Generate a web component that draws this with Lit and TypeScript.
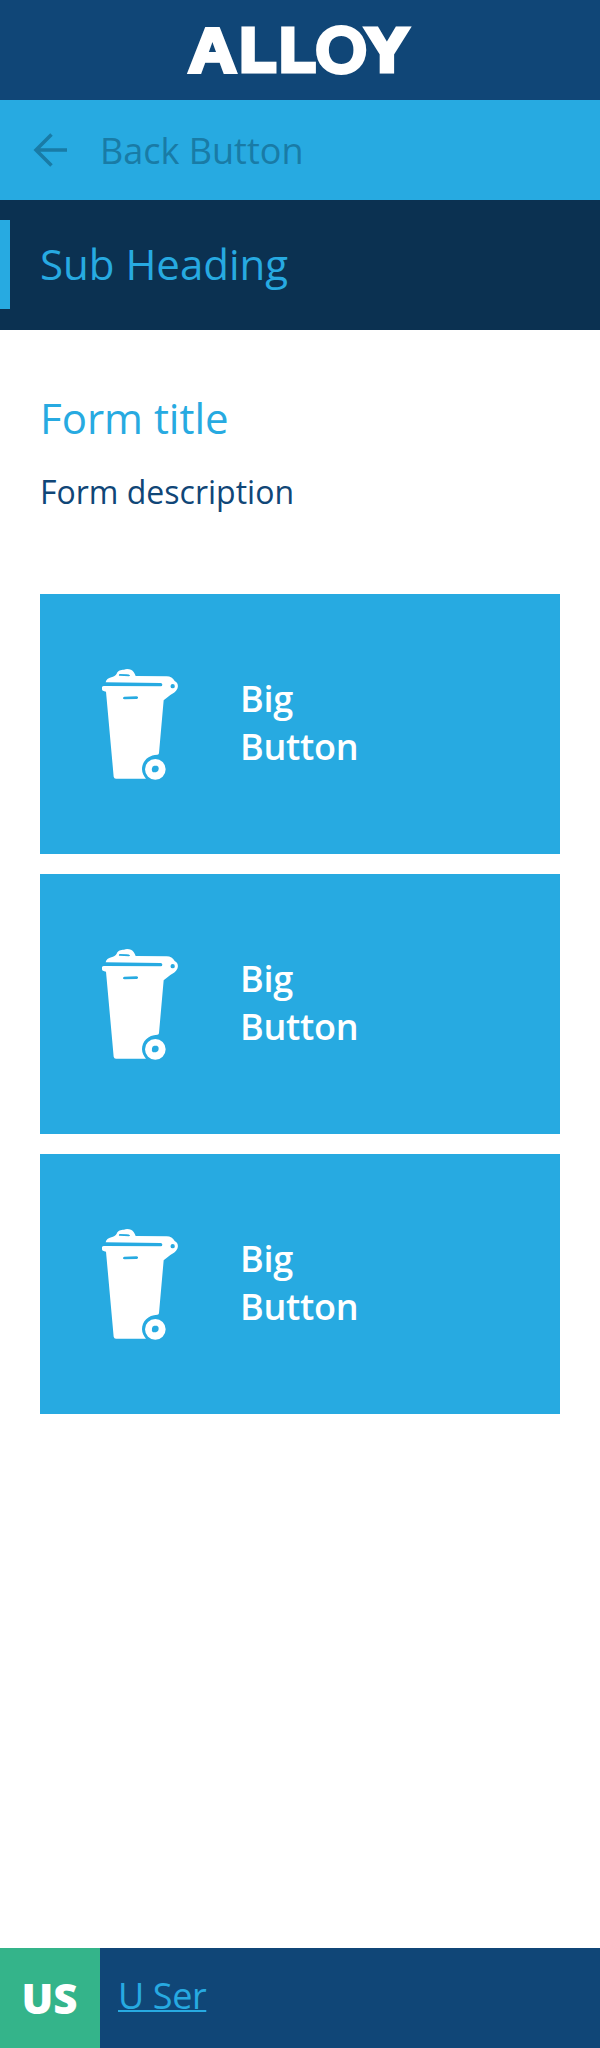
import { LitElement, html, css } from "lit";
import { customElement } from "lit/decorators.js";

@customElement("bin-icon")
class BinIcon extends LitElement {
  static styles = css`
    :host { display: block; width: 100px; height: 140px; }
    svg { display: block; }
  `;
  render() {
    return html`<svg width="100" height="140" viewBox="0 0 300 420" aria-hidden="true">
      <path fill="#fff" fill-rule="evenodd" d="M47 82C48 74 55 70 64 67C71 65 77 62 80 56C84 46 92 44 102 44C108 41 117 42 123 44C130 46 134 55 137 63L230 64C241 64 249 70 254 78C263 82 266 92 262 101C258 111 249 114 241 120L221 136L207 294Q207 299 202 299C174 300 156 319 156 343C156 354 162 364 168 371L78 371Q72 371 71 365L48 110Q36 109 36 103L36 97Q37 93 42 93L212 94Q217 94 217 89Q217 84 212 84ZM89 57Q86 58 87 62L116 64Q120 64 120 61Q117 58 110 58ZM248 87A6.5 6.5 0 1 0 248 100A6.5 6.5 0 1 0 248 87ZM103 125Q99 126 99 130Q99 133 104 133L140 132Q145 131 144 127Q143 124 139 124Z"/>
      <path fill="#fff" fill-rule="evenodd" d="M196 312A31 31 0 1 0 196 374A31 31 0 1 0 196 312ZM193 332L201 332Q207 335 206 342Q206 350 198 352L189 352Q184 348 186 340Q187 333 193 332Z"/>
    </svg>`;
  }
}

@customElement("big-button")
class BigButton extends LitElement {
  static styles = css`
    :host { display: block; }
    .button {
      display: flex; align-items: center; width: 100%; height: 260px;
      padding: 2px 0 0 50px; box-sizing: border-box; border: 0;
      background: #27aae1; color: #fff; text-align: left; letter-spacing: -0.25px;
      font: 600 36px/48px "Open Sans", sans-serif;
    }
    .label { width: 130px; margin: 0 0 4px 50px; }
  `;
  render() {
    return html`<button class="button"><bin-icon></bin-icon><span class="label">Big Button</span></button>`;
  }
}

@customElement("app-root")
class AppRoot extends LitElement {
  static styles = css`
    :host {
      display: flex; flex-direction: column; width: 600px; height: 2048px;
      background: #fff; font-family: "Open Sans", sans-serif; overflow: hidden;
    }
    .header { height: 100px; background: #104677; flex: none; display: flex; }
    .logo {
      display: block; font-family: "Liberation Sans", sans-serif; font-weight: 900;
      font-size: 60.44px; fill: #fff; stroke: #fff; stroke-width: 5px;
    }
    .logo-a { font-size: 63.2px; stroke-width: 4px; }
    .logo-o { font-family: Lato, sans-serif; font-size: 63.33px; stroke-width: 3px; }
    .back {
      height: 100px; flex: none; background: #27aae1; color: #197ba6; display: flex;
      align-items: center; font-size: 36px; font-weight: 400; line-height: 50px;
    }
    .back-label { padding-top: 2px; }
    .arrow { width: 100px; height: 100px; }
    .sub { height: 130px; flex: none; background: #0b3151; padding: 20px 0; box-sizing: border-box; }
    .sub-title {
      margin: 0; height: 89px; border-left: 10px solid #27aae1; padding-left: 30px;
      font-size: 42px; font-weight: 400; line-height: 88px; color: #27aae1;
    }
    .form { flex: 1; padding: 59px 40px 0; }
    .title { margin: 0; font-size: 42px; font-weight: 400; line-height: 57px; color: #27aae1; }
    .description { margin: 24px 0 0; font-size: 32px; line-height: 44px; color: #104677; }
    .buttons { display: flex; flex-direction: column; gap: 20px; margin-top: 80px; }
    .footer { height: 100px; flex: none; background: #104677; display: flex; align-items: center; }
    .avatar {
      width: 99px; padding-right: 1px; height: 100px; background: #34b48a; color: #fff; font-size: 42px;
      font-weight: 800; line-height: 100px; text-align: center;
    }
    .user {
      margin: 0 0 5px 18px; color: #27aae1; font-size: 36px; font-weight: 400; line-height: 50px;
      letter-spacing: -0.4px; text-decoration: underline; text-decoration-thickness: 2px;
    }
  `;
  render() {
    return html`
      <header class="header">
        <svg class="logo" width="600" height="100" role="img" aria-label="ALLOY"><text><tspan class="logo-a" x="188.3" y="71.5" textLength="48.4" lengthAdjust="spacingAndGlyphs">A</tspan><tspan x="240" y="71" textLength="35.8" lengthAdjust="spacingAndGlyphs">L</tspan><tspan x="279.7" y="71" textLength="35.5" lengthAdjust="spacingAndGlyphs">L</tspan><tspan class="logo-o" x="315.5" y="72.8">O</tspan><tspan x="365.7" y="71" textLength="42.3" lengthAdjust="spacingAndGlyphs">Y</tspan></text></svg>
      </header>
      <nav class="back">
        <svg class="arrow" viewBox="0 0 100 100" aria-hidden="true">
          <path d="M51.5 34.5L36 50L51.5 65.5M35.5 50H67" fill="none" stroke="#197ba6" stroke-width="3.5"/>
        </svg>
        <span class="back-label">Back Button</span>
      </nav>
      <section class="sub"><h1 class="sub-title">Sub Heading</h1></section>
      <main class="form">
        <h2 class="title">Form title</h2>
        <p class="description">Form description</p>
        <div class="buttons">${[0, 1, 2].map(() => html`<big-button></big-button>`)}</div>
      </main>
      <footer class="footer"><div class="avatar">US</div><a class="user">U Ser</a></footer>
    `;
  }
}
